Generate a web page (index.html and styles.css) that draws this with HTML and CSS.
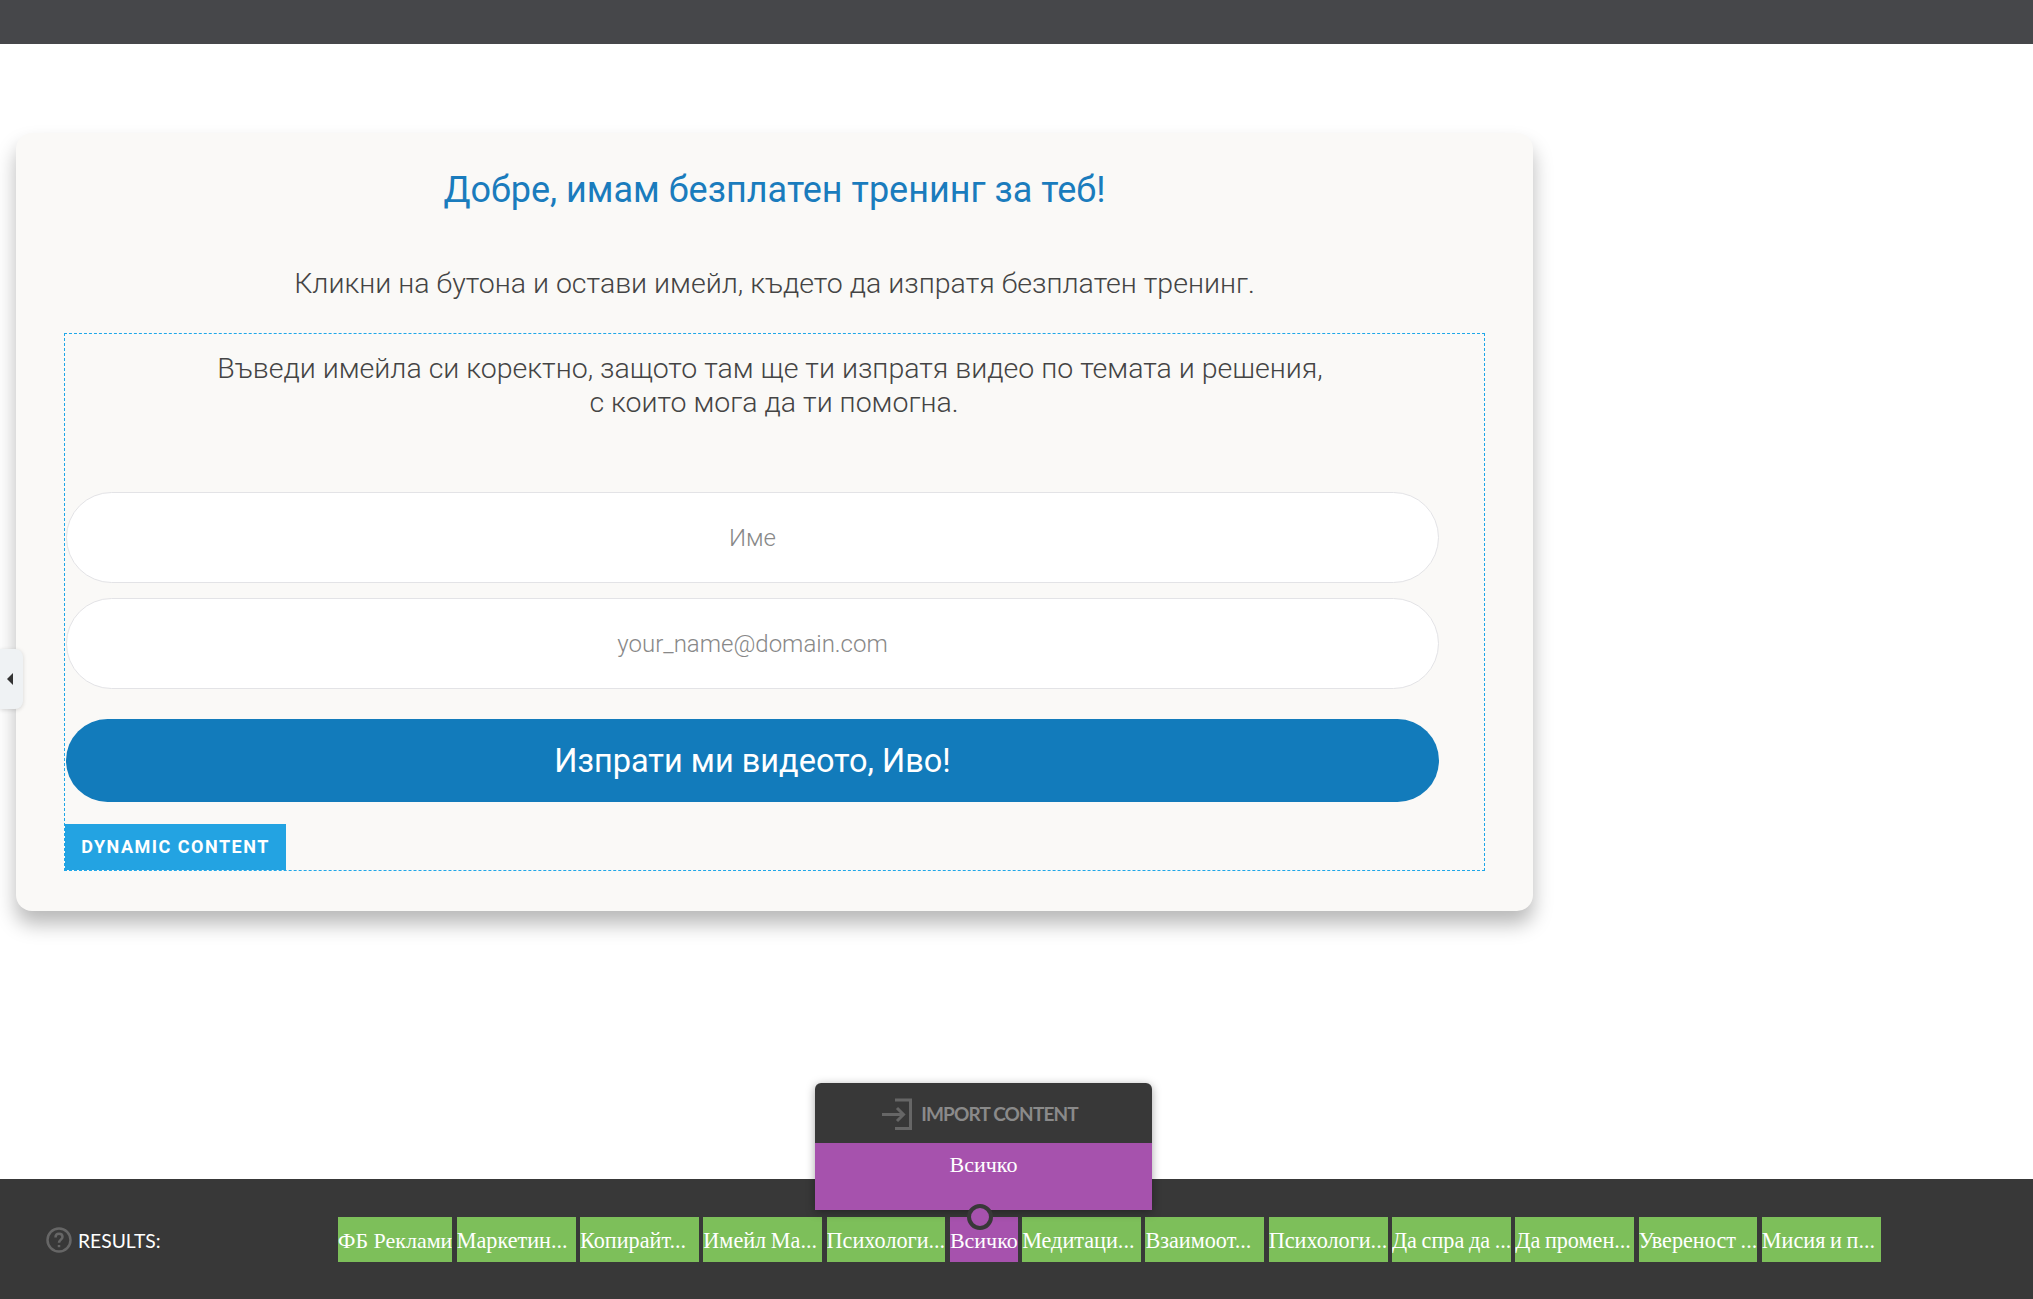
FILE: index.html
```html
<!DOCTYPE html>
<html lang="bg">
<head>
    <meta charset="UTF-8">
    <title>Import content</title>
    <link rel="stylesheet" href="styles.css">
</head>
<body>
    <div class="top-bar"></div>

    <main class="page">
        <button class="side-tab" type="button"><span class="side-arrow"></span></button>

        <section class="card">
            <h1 class="card-title">Добре, имам безплатен тренинг за теб!</h1>
            <p class="card-sub">Кликни на бутона и остави имейл, където да изпратя безплатен тренинг.</p>

            <div class="dynamic-box">
                <p class="box-text">Въведи имейла си коректно, защото там ще ти изпратя видео по темата и решения,<span class="box-line">с които мога да ти помогна.</span></p>
                <form class="signup">
                    <input class="field" type="text" placeholder="Име">
                    <input class="field" type="text" placeholder="your_name@domain.com">
                    <button class="send" type="button">Изпрати ми видеото, Иво!</button>
                </form>
                <div class="box-badge">DYNAMIC CONTENT</div>
            </div>
        </section>
    </main>

    <footer class="results-bar">
        <div class="import-pop">
            <div class="import-head">
                <svg class="import-icon" width="30" height="32" viewBox="0 0 30 32" fill="none" stroke="#666" stroke-width="3">
                    <path d="M13 2H28.500V30.500H13"/>
                    <path d="M0 16.500H21M15 10L21.500 16.500L15 23"/>
                </svg>
                <span>IMPORT CONTENT</span>
            </div>
            <div class="import-body">Всичко</div>
            <span class="import-knob"></span>
        </div>

        <div class="results-label">
            <svg width="26" height="26" viewBox="0 0 26 26" fill="none" stroke="#666" stroke-width="2.500">
                <circle cx="13" cy="13" r="11.500"/>
                <path d="M9.500 10.500C9.500 8 11 6.800 13 6.800C15 6.800 16.500 8 16.500 10C16.500 12.500 13 12.800 13 15.800"/>
                <path d="M13 18V20.200"/>
            </svg>
            <span>RESULTS:</span>
        </div>

        <div class="chips">
            <a class="chip chip-fit">ФБ Реклами</a>
            <a class="chip">Маркетин...</a>
            <a class="chip">Копирайт...</a>
            <a class="chip">Имейл Ма...</a>
            <a class="chip">Психологи...</a>
            <a class="chip chip-fit chip-active">Всичко</a>
            <a class="chip">Медитаци...</a>
            <a class="chip">Взаимоот...</a>
            <a class="chip">Психологи...</a>
            <a class="chip">Да спра да ...</a>
            <a class="chip">Да промен...</a>
            <a class="chip">Увереност ...</a>
            <a class="chip">Мисия и п...</a>
        </div>
    </footer>
</body>
</html>
```

FILE: styles.css
```css
* {
    box-sizing: border-box;
}
body {
    margin: 0;
    height: 1299px;
    display: flex;
    flex-direction: column;
    background-color: #fff;
    font-family: Roboto, sans-serif;
    overflow: hidden;
}
.top-bar {
    height: 44px;
    background-color: #46474a;
}
.page {
    flex: 1;
    position: relative;
    padding: 89px 0 0 16px;
}
.side-tab {
    position: absolute;
    left: 0;
    top: 605px;
    width: 23px;
    height: 60px;
    padding: 0;
    border: none;
    border-radius: 0 8px 8px 0;
    background-color: #eff2f4;
    box-shadow: 0 1px 4px rgba(0, 0, 0, 0.15);
}
.side-arrow {
    display: block;
    width: 0;
    height: 0;
    margin-left: 7px;
    border-top: 6px solid transparent;
    border-bottom: 6px solid transparent;
    border-right: 6px solid #333;
}
.card {
    width: 1517px;
    height: 778px;
    padding: 0 48px;
    border-radius: 16px;
    background-color: #faf9f7;
    box-shadow: 0 13px 20px rgba(0, 0, 0, 0.28);
}
.card-title {
    margin: 0;
    padding-top: 33px;
    height: 112px;
    font-size: 36px;
    line-height: 48px;
    font-weight: 400;
    text-align: center;
    color: #1a7cbd;
}
.card-sub {
    margin: 0;
    height: 88px;
    padding-top: 21px;
    font-size: 28.500px;
    line-height: 36px;
    font-weight: 300;
    text-align: center;
    color: #444;
}
.dynamic-box {
    height: 538px;
    border: 1px dashed #1ea7e8;
    display: flex;
    flex-direction: column;
}
.box-text {
    margin: 0;
    height: 158px;
    padding: 18px 9px 0 0;
    font-size: 28.500px;
    line-height: 34px;
    font-weight: 300;
    text-align: center;
    color: #444;
}
.box-line {
    display: block;
    padding-left: 8px;
}
.signup {
    width: 1373px;
    margin-left: 1px;
    display: flex;
    flex-direction: column;
    gap: 15px;
}
.field {
    height: 91px;
    padding: 0 20px;
    border: 1px solid #e3e3e6;
    border-radius: 46px;
    background-color: #fff;
    font-family: Roboto, sans-serif;
    font-size: 24px;
    font-weight: 300;
    text-align: center;
}
.field::placeholder {
    color: #888;
    opacity: 1;
}
.send {
    height: 83px;
    margin-top: 15px;
    border: none;
    border-radius: 42px;
    background-color: #127bbb;
    color: #fff;
    font-family: Roboto, sans-serif;
    font-size: 32.500px;
}
.box-badge {
    align-self: flex-start;
    margin-top: auto;
    height: 46px;
    width: 221px;
    background-color: #23a3e2;
    color: #fff;
    font-size: 18px;
    font-weight: 700;
    line-height: 46px;
    letter-spacing: 1.500px;
    text-align: center;
}
.results-bar {
    position: relative;
    height: 120px;
    padding: 38px 0 0 46px;
    display: flex;
    align-items: flex-start;
    background-color: #383838;
}
.results-label {
    width: 292px;
    height: 46px;
    display: flex;
    align-items: center;
    gap: 6px;
    color: #fff;
    font-family: Lato, sans-serif;
    font-size: 19.300px;
}
.chips {
    display: flex;
    gap: 4.400px;
}
.chip {
    width: 118.900px;
    height: 45px;
    overflow: hidden;
    white-space: nowrap;
    background-color: #7dbf5a;
    color: #fff;
    font-family: "Liberation Serif", serif;
    font-size: 22.200px;
    line-height: 47px;
    word-spacing: -0.900px;
}
.chip-fit {
    width: auto;
    font-size: 22px;
    word-spacing: normal;
}
.chip-active {
    background-color: #a652ad;
}
.import-pop {
    position: absolute;
    left: 815px;
    top: -96px;
    width: 337px;
    height: 127px;
    border-radius: 6px 6px 0 0;
    box-shadow: 0 2px 10px rgba(0, 0, 0, 0.35);
    z-index: 2;
}
.import-head {
    height: 60px;
    padding: 1px 7px 0 0;
    display: flex;
    align-items: center;
    justify-content: center;
    gap: 9px;
    border-radius: 6px 6px 0 0;
    background-color: #383838;
    color: #8a8a8a;
    font-family: Lato, sans-serif;
    font-size: 19px;
    font-weight: 700;
    letter-spacing: -0.850px;
}
.import-body {
    height: 67px;
    padding-top: 8px;
    background-color: #a652ad;
    color: #fff;
    font-family: "Liberation Serif", serif;
    font-size: 22px;
    line-height: 28px;
    text-align: center;
}
.import-knob {
    position: absolute;
    left: 152px;
    top: 121px;
    width: 26px;
    height: 26px;
    border: 4px solid #383838;
    border-radius: 50%;
    background-color: #a652ad;
}
```
